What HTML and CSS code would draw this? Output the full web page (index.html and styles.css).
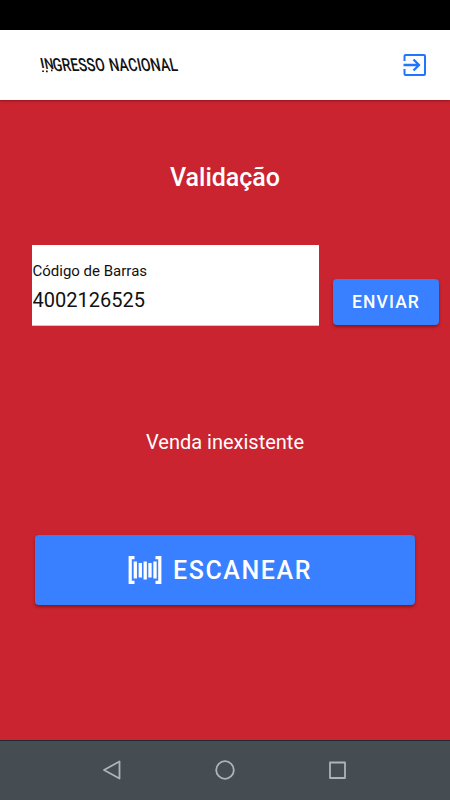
FILE: index.html
```html
<!DOCTYPE html>
<html lang="pt-BR">
<head>
<meta charset="UTF-8">
<meta name="viewport" content="width=device-width, initial-scale=1.0">
<title>Validação</title>
<link rel="stylesheet" href="styles.css">
</head>
<body>

<div class="app">
    <div class="status-bar"></div>

    <header class="toolbar">
        <svg class="logo" width="160" height="24" viewBox="0 0 160 24" role="img">
            <g transform="skewX(12)">
                <text x="0" y="15.5" font-size="14" textLength="4" lengthAdjust="spacingAndGlyphs">I</text>
                <text x="4" y="16" font-size="15" textLength="9" lengthAdjust="spacingAndGlyphs">N</text>
                <text x="12" y="18.5" textLength="52" lengthAdjust="spacingAndGlyphs">GRESSO</text>
                <text x="68.5" y="18.5" textLength="68" lengthAdjust="spacingAndGlyphs">NACIONAL</text>
            </g>
            <path d="M4.2 18.2h1.7M8 18.4h1.7M13 17.4h1.5" stroke="#111" stroke-width="1.6"/>
        </svg>
        <button class="exit" aria-label="Sair">
            <svg width="24" height="24" viewBox="0 0 24 24" fill="none" stroke="#2176fd" stroke-width="2">
                <path d="M1.5 8V3Q1.5 2 2.5 2H21Q22 2 22 3V21Q22 22 21 22H2.5Q1.5 22 1.5 21V16"/>
                <path d="M.5 12H16M10.5 6.5 16 12 10.5 17.5" stroke-width="2.3"/>
            </svg>
        </button>
    </header>

    <main class="content">
        <h1>Validação</h1>

        <form class="code-form">
            <div class="field">
                <label for="codigo">Código de Barras</label>
                <input type="text" id="codigo" value="4002126525">
            </div>
            <button type="button" class="btn btn-send">ENVIAR</button>
        </form>

        <p class="message">Venda inexistente</p>

        <button type="button" class="btn btn-scan">
            <svg width="34" height="28" viewBox="0 0 34 28" fill="none" stroke="#fff">
                <path d="M6.5 1.7H2.2V26.3H6.5M27.5 1.7H31.8V26.3H27.5" stroke-width="3.2"/>
                <path d="M7.3 5.5V22.5M12.3 7V21.5M17.2 5.5V23.5M22 7V21.5M27 5.5V22.5" stroke-width="3.3"/>
            </svg>
            <span>ESCANEAR</span>
        </button>
    </main>

    <nav class="nav-bar">
        <svg width="20" height="20" viewBox="0 0 20 20"><path d="M2 10 17.5 1.5V18.5Z"/></svg>
        <svg width="20" height="20" viewBox="0 0 20 20"><circle cx="10" cy="10" r="8.8"/></svg>
        <svg width="20" height="20" viewBox="0 0 20 20"><rect x="2" y="2.5" width="15" height="15.5"/></svg>
    </nav>
</div>

</body>
</html>
```

FILE: styles.css
```css
* {
    box-sizing: border-box;
}
body {
    margin: 0;
    font-family: Roboto, sans-serif;
}
.app {
    display: flex;
    flex-direction: column;
    height: 800px;
    overflow: hidden;
    background-color: #c92430;
}
.status-bar {
    height: 30px;
    background-color: #000;
}
.toolbar {
    display: flex;
    align-items: center;
    justify-content: space-between;
    height: 70px;
    padding: 0 23px 0 38px;
    background-color: #fff;
    box-shadow: 0 1px 2px rgba(100, 0, 0, 0.5);
}
.logo {
    overflow: visible;
    fill: #111;
    font-size: 18px;
    font-weight: 500;
}
.exit {
    display: flex;
    padding: 0;
    border: none;
    background: none;
}
.content {
    flex: 1;
    display: flex;
    flex-direction: column;
    color: #fff;
}
h1 {
    margin: 63px 0 0;
    font-size: 25px;
    line-height: 30px;
    font-weight: 500;
    text-align: center;
}
.code-form {
    display: flex;
    align-items: flex-end;
    margin: 52px 11px 0 32px;
    height: 81px;
}
.field {
    display: flex;
    flex-direction: column;
    width: 287px;
    height: 81px;
    padding: 16px 0 0 0.5px;
    background-color: #fff;
    border-bottom: 1px solid #c8c8c8;
    color: #111;
}
.field label {
    font-size: 15px;
    line-height: 20px;
}
.field input {
    width: 100%;
    height: 38px;
    padding: 0;
    border: none;
    outline: none;
    background: none;
    color: #111;
    font-family: inherit;
    font-size: 20px;
}
.btn {
    display: flex;
    align-items: center;
    justify-content: center;
    padding: 0;
    border: none;
    border-radius: 4px;
    background-color: #3880ff;
    box-shadow: 0 2px 3px rgba(90, 0, 0, 0.5);
    color: #fff;
    font-family: inherit;
    font-weight: 500;
}
.btn-send {
    width: 106px;
    height: 46px;
    margin: 0 0 1px 14px;
    font-size: 17.5px;
    letter-spacing: 1.1px;
}
.message {
    margin: 101px 0 0;
    font-size: 20px;
    line-height: 30px;
    text-align: center;
}
.btn-scan {
    gap: 11px;
    height: 70px;
    margin: 78px 35px 0;
    padding-right: 10px;
    font-size: 25px;
    letter-spacing: 1.6px;
}
.nav-bar {
    display: flex;
    align-items: center;
    justify-content: center;
    gap: 93px;
    height: 60px;
    padding-bottom: 1px;
    border-top: 1px solid #23292c;
    background-color: #454d52;
}
.nav-bar svg {
    fill: none;
    stroke: #b0b3b5;
    stroke-width: 1.8;
    stroke-linejoin: round;
}
```
